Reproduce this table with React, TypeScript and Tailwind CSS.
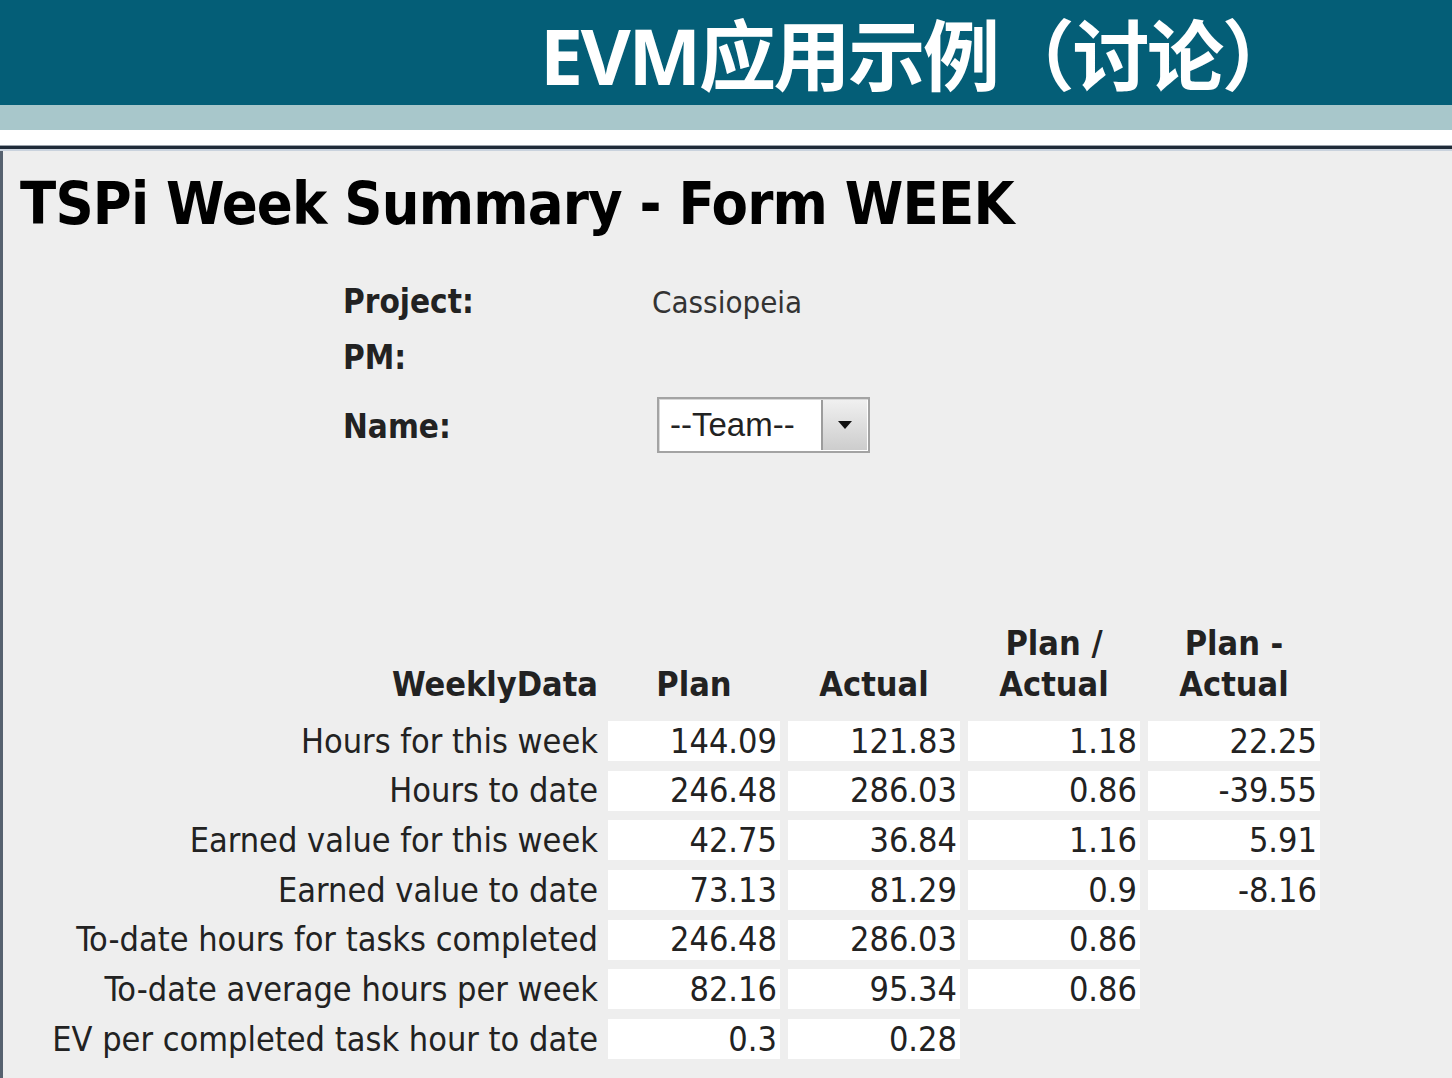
import React from 'react'

const cond = { fontFamily: '"DejaVu Sans Condensed", "DejaVu Sans", Tahoma, sans-serif', fontStretch: 'condensed' as const }

type Row = { label: string; values: (string | null)[] }

const rows: Row[] = [
  { label: 'Hours for this week', values: ['144.09', '121.83', '1.18', '22.25'] },
  { label: 'Hours to date', values: ['246.48', '286.03', '0.86', '-39.55'] },
  { label: 'Earned value for this week', values: ['42.75', '36.84', '1.16', '5.91'] },
  { label: 'Earned value to date', values: ['73.13', '81.29', '0.9', '-8.16'] },
  { label: 'To-date hours for tasks completed', values: ['246.48', '286.03', '0.86', null] },
  { label: 'To-date average hours per week', values: ['82.16', '95.34', '0.86', null] },
  { label: 'EV per completed task hour to date', values: ['0.3', '0.28', null, null] },
]

const headers = [['Plan'], ['Actual'], ['Plan /', 'Actual'], ['Plan -', 'Actual']]

export default function App() {
  return (
    <div className="w-[1452px] h-[1078px] overflow-hidden bg-white flex flex-col">
      {/* slide title */}
      <div className="h-[105px] bg-[#045e77] flex items-center pl-[540px] pt-[6px]">
        <h1
          className="text-white font-bold text-[77px] leading-none tracking-[-2.3px]"
          style={{ fontFamily: '"Noto Sans", "Noto Sans CJK SC", sans-serif' }}
        >
          EVM应用示例（讨论）
        </h1>
      </div>
      <div className="h-[25px] bg-[#a8c7cb]" />
      <div className="h-[15px] bg-white" />
      <div className="h-[1px] bg-[#9aa2ab]" />
      <div className="h-[3px] bg-[#1f2b38]" />
      <div className="h-[2px] bg-[#c9d2dd]" />

      {/* form window */}
      <div className="flex-1 bg-[#eeeeee] border-l-[3px] border-[#56616f] text-[#222]" style={cond}>
        <h2 className="pl-[17px] pt-[18px] h-[84px] text-[59px] leading-[70px] font-bold text-black tracking-[-0.8px]">
          TSPi Week Summary - Form WEEK
        </h2>

        <div className="ml-[340px] mt-[45px] text-[33px]">
          <div className="flex items-center h-[44px]">
            <span className="w-[309px] font-bold">Project:</span>
            <span className="text-[#333] text-[31px]">Cassiopeia</span>
          </div>
          <div className="flex items-center h-[44px] mt-[12px]">
            <span className="w-[309px] font-bold">PM:</span>
          </div>
          <div className="flex items-center h-[56px] mt-[17px]">
            <span className="w-[314px] font-bold pt-[4px]">Name:</span>
            <div className="flex h-[56px] w-[213px] border-2 border-[#a3a3a3] bg-white shadow-[inset_1px_1px_0_#d8d8d8]">
              <span
                className="flex-1 flex items-center pl-[11px] text-[33px] text-[#222]"
                style={{ fontFamily: '"Liberation Sans", Arial, sans-serif' }}
              >
                --Team--
              </span>
              <div className="w-[46px] my-[1px] mr-[1px] border-l-2 border-[#9c9c9c] bg-gradient-to-b from-[#f0f0f0] to-[#cdcdcd] flex items-center justify-center">
                <svg width="16" height="10" viewBox="0 0 16 10">
                  <path d="M1 1 L15 1 L8 9 Z" fill="#111" />
                </svg>
              </div>
            </div>
          </div>
        </div>

        {/* weekly data table */}
        <div className="mt-[170px] grid grid-cols-[597px_172px_172px_172px_172px] gap-x-[8px] text-[34px]">
          <div className="flex items-end justify-end pr-[2px] h-[82px] font-bold leading-[41px]">WeeklyData</div>
          {headers.map((h, i) => (
            <div key={i} className="flex flex-col justify-end items-center h-[82px] font-bold leading-[41px]">
              {h.map(line => (
                <span key={line}>{line}</span>
              ))}
            </div>
          ))}
          <div className="col-span-5 h-[16px]" />
          {rows.map((r, ri) => (
            <React.Fragment key={r.label}>
              <div className={`flex items-center justify-end pr-[2px] h-[40px] text-[#222] ${ri > 0 ? 'mt-[9.7px]' : ''}`}>
                {r.label}
              </div>
              {r.values.map((v, vi) =>
                v === null ? (
                  <div key={vi} className={`h-[40px] ${ri > 0 ? 'mt-[9.7px]' : ''}`} />
                ) : (
                  <div
                    key={vi}
                    className={`h-[40px] bg-white flex items-center justify-end pr-[3px] text-[#222] ${ri > 0 ? 'mt-[9.7px]' : ''}`}
                  >
                    {v}
                  </div>
                )
              )}
            </React.Fragment>
          ))}
        </div>
      </div>
    </div>
  )
}
